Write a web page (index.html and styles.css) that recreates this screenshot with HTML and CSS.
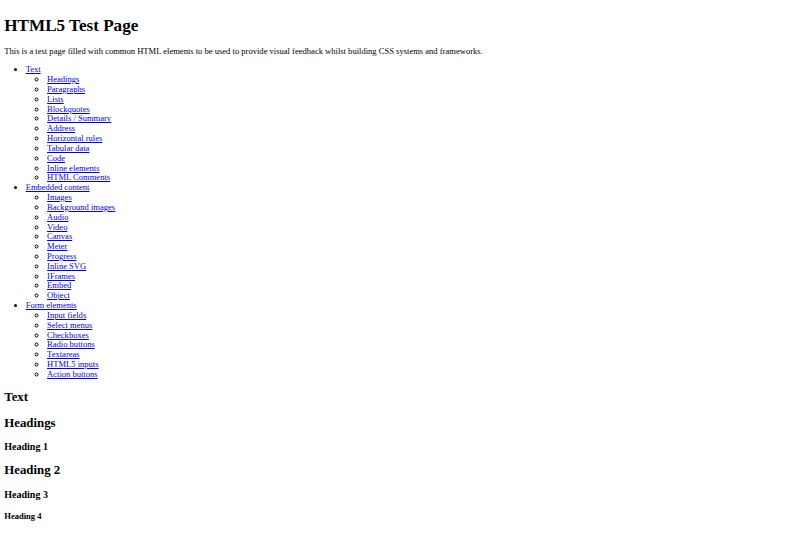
FILE: index.html
```html
<!DOCTYPE html>
<html lang="en">
<head>
<meta charset="utf-8">
<title>HTML5 Test Page</title>
<link rel="stylesheet" href="styles.css">
</head>
<body>
<div class="page">
  <header class="top">
    <h1 class="title">HTML5 Test Page</h1>
    <p class="intro">This is a test page filled with common HTML elements to be used to provide visual feedback whilst building CSS systems and frameworks.</p>
  </header>
  <nav>
    <ul class="toc">
      <li><a href="#text">Text</a>
        <ul class="sub">
          <li><a href="#text__headings">Headings</a></li>
          <li><a href="#text__paragraphs">Paragraphs</a></li>
          <li><a href="#text__lists">Lists</a></li>
          <li><a href="#text__blockquotes">Blockquotes</a></li>
          <li><a href="#text__details">Details / Summary</a></li>
          <li><a href="#text__address">Address</a></li>
          <li><a href="#text__hr">Horizontal rules</a></li>
          <li><a href="#text__tables">Tabular data</a></li>
          <li><a href="#text__code">Code</a></li>
          <li><a href="#text__inline">Inline elements</a></li>
          <li><a href="#text__comments">HTML Comments</a></li>
        </ul>
      </li>
      <li><a href="#embedded">Embedded content</a>
        <ul class="sub">
          <li><a href="#embedded__images">Images</a></li>
          <li><a href="#embedded__bgimages">Background images</a></li>
          <li><a href="#embedded__audio">Audio</a></li>
          <li><a href="#embedded__video">Video</a></li>
          <li><a href="#embedded__canvas">Canvas</a></li>
          <li><a href="#embedded__meter">Meter</a></li>
          <li><a href="#embedded__progress">Progress</a></li>
          <li><a href="#embedded__svg">Inline SVG</a></li>
          <li><a href="#embedded__iframe">IFrames</a></li>
          <li><a href="#embedded__embed">Embed</a></li>
          <li><a href="#embedded__object">Object</a></li>
        </ul>
      </li>
      <li><a href="#forms">Form elements</a>
        <ul class="sub">
          <li><a href="#forms__input">Input fields</a></li>
          <li><a href="#forms__select">Select menus</a></li>
          <li><a href="#forms__checkbox">Checkboxes</a></li>
          <li><a href="#forms__radio">Radio buttons</a></li>
          <li><a href="#forms__textareas">Textareas</a></li>
          <li><a href="#forms__html5">HTML5 inputs</a></li>
          <li><a href="#forms__action">Action buttons</a></li>
        </ul>
      </li>
    </ul>
  </nav>
  <main>
    <section id="text">
      <h1 class="sec">Text</h1>
      <article id="text__headings">
        <h2 class="art">Headings</h2>
        <div>
          <h1 class="hd1">Heading 1</h1>
          <h2 class="hd2">Heading 2</h2>
          <h3 class="hd3">Heading 3</h3>
          <h4 class="hd4">Heading 4</h4>
          <h5 class="hd5">Heading 5</h5>
          <h6 class="hd6">Heading 6</h6>
        </div>
      </article>
    </section>
  </main>
</div>
</body>
</html>
```
FILE: styles.css
```css
html {
  background: #ffffff;
}
body {
  margin: 4.28px;
  font-family: "Liberation Serif", "Times New Roman", serif;
  font-size: 8.56px;
  line-height: 1.149;
  color: #000000;
}
a {
  color: #0000ee;
  text-decoration: underline;
}
h1, h2, h3, h4, h5, h6 {
  font-weight: bold;
  margin-left: 0;
  margin-right: 0;
}
.title {
  font-size: 2em;
  margin: 0.67em 0;
}
.intro {
  margin: 1em 0;
}
.toc {
  margin: 1em 0;
  padding-left: 21.4px;
  list-style: disc;
}
.sub {
  margin: 0;
  padding-left: 21.4px;
  list-style: circle;
}
.sec {
  font-size: 1.5em;
  margin: 0.83em 0;
}
.art {
  font-size: 1.5em;
  margin: 0.83em 0;
}
.hd1 {
  font-size: 1.17em;
  margin: 1em 0;
}
.hd2 {
  font-size: 1.5em;
  margin: 0.83em 0;
}
.hd3 {
  font-size: 1.17em;
  margin: 1em 0;
}
.hd4 {
  font-size: 1em;
  margin: 1.33em 0;
}
.hd5 {
  font-size: 0.83em;
  margin: 1.67em 0;
}
.hd6 {
  font-size: 0.67em;
  margin: 2.33em 0;
}
```
